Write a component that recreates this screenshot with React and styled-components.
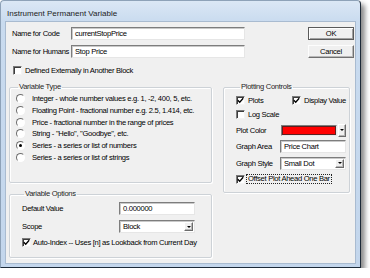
import React from 'react';
import styled, { createGlobalStyle } from 'styled-components';

const GlobalStyle = createGlobalStyle`
  html, body {
    margin: 0;
    padding: 0;
    background: #ffffff;
  }
  body {
    font-family: "Liberation Sans", Arial, sans-serif;
    font-size: 7.6px;
    letter-spacing: -0.3px;
    color: #000;
  }
`;

const StyledWindow = styled.div`
  width: 361px;
  height: 268px;
  box-sizing: border-box;
  display: flex;
  flex-direction: column;
  border: 1px solid;
  border-color: #8ea2b8 #1d2a38 #1d2a38 #8ea2b8;
  border-radius: 4px 4px 0 0;
  background: linear-gradient(to bottom, #dbe7f5 0px, #c9dbef 21px, #c3d6ec 100%);
  box-shadow: 4px 4px 5px rgba(0, 0, 0, 0.45);
`;

const StyledTitleBar = styled.div`
  height: 21px;
  box-sizing: border-box;
  padding: 3px 0 0 6px;
  display: flex;
  align-items: center;
  font-size: 8px;
  letter-spacing: 0;
  color: #1c1c1c;
`;

const StyledContent = styled.div`
  flex: 1;
  margin: 0 5px 4px 5px;
  background: #f0f0f0;
  box-shadow: 0 0 0 1px #a9bbd0;
  padding-top: 5px;
  display: flex;
  flex-direction: column;
`;

const StyledTopArea = styled.div`
  display: flex;
  padding: 0 1px 0 6px;
`;

const StyledStack = styled.div`
  display: flex;
  flex-direction: column;
  gap: ${({ $gap }) => $gap ?? 5}px;
  margin-top: ${({ $top }) => $top ?? 0}px;
`;

const StyledFieldRow = styled.div`
  display: flex;
  align-items: center;
  height: 13px;
  margin-top: ${({ $top }) => $top ?? 0}px;
`;

const StyledFieldLabel = styled.span`
  width: ${({ $width }) => $width}px;
  flex-shrink: 0;
  white-space: nowrap;
`;

const StyledTextBox = styled.div`
  width: ${({ $width }) => $width}px;
  height: 13px;
  box-sizing: border-box;
  display: flex;
  align-items: center;
  padding-left: 3px;
  background: #fff;
  border: 1px solid;
  border-color: #7d7d7d #e6e6e6 #e6e6e6 #7d7d7d;
  box-shadow: inset 1px 1px 0 #c9c9c9;
  white-space: nowrap;
  overflow: hidden;
`;

const StyledSelectText = styled.span`
  flex: 1;
`;

const StyledArrowButton = styled.span`
  width: ${({ $width }) => $width ?? 9}px;
  height: ${({ $height }) => $height ?? 9}px;
  box-sizing: border-box;
  margin-right: ${({ $inset }) => ($inset ? 1 : 0)}px;
  display: flex;
  align-items: center;
  justify-content: center;
  background: #f0f0f0;
  border: 1px solid;
  border-color: #ffffff #6b6b6b #6b6b6b #ffffff;
  box-shadow: inset -1px -1px 0 #b5b5b5;
  &::after {
    content: '';
    border-left: 2px solid transparent;
    border-right: 2px solid transparent;
    border-top: 2px solid #000;
  }
`;

const StyledButton = styled.div`
  width: 46px;
  height: 13px;
  box-sizing: border-box;
  display: flex;
  align-items: center;
  justify-content: center;
  background: #f0f0f0;
  border: 1px solid;
  border-color: ${({ $primary }) =>
    $primary ? '#5a5a5a' : '#fdfdfd #707070 #707070 #fdfdfd'};
  box-shadow: ${({ $primary }) =>
    $primary ? 'inset 1px 1px 0 #ffffff, inset -1px -1px 0 #a0a0a0' : 'inset -1px -1px 0 #b8b8b8'};
`;

const StyledButtonStack = styled(StyledStack)`
  margin-left: auto;
`;

const StyledCheckRow = styled.div`
  display: flex;
  align-items: center;
  height: 9px;
  gap: ${({ $gap }) => $gap ?? 3}px;
  margin-top: ${({ $top }) => $top ?? 0}px;
  padding-left: ${({ $left }) => $left ?? 0}px;
  white-space: nowrap;
`;

const StyledCheckBox = styled.span`
  width: 9px;
  height: 9px;
  flex-shrink: 0;
  box-sizing: border-box;
  display: flex;
  align-items: center;
  justify-content: center;
  background: #fff;
  border: 1px solid;
  border-color: #7a7a7a #f4f4f4 #f4f4f4 #7a7a7a;
  box-shadow: inset 1px 1px 0 #3c3c3c;
`;

const StyledRadio = styled.span`
  width: 9px;
  height: 9px;
  flex-shrink: 0;
  box-sizing: border-box;
  border-radius: 50%;
  display: flex;
  align-items: center;
  justify-content: center;
  background: #fff;
  border: 1px solid;
  border-color: #6e6e6e #ffffff #ffffff #6e6e6e;
  &::after {
    content: '';
    width: 3px;
    height: 3px;
    border-radius: 50%;
    background: ${({ $checked }) => ($checked ? '#000' : 'transparent')};
  }
`;

const StyledFocusText = styled.span`
  border: 1px dotted #222;
  padding: 0 1px;
  line-height: 8px;
`;

const StyledColumns = styled.div`
  display: flex;
  gap: 11px;
  margin-top: 7px;
  padding-left: 3px;
`;

const StyledGroup = styled.fieldset`
  width: ${({ $width }) => $width}px;
  height: ${({ $height }) => $height}px;
  box-sizing: border-box;
  margin: 0;
  padding: ${({ $pad }) => $pad};
  min-width: 0;
  border: 1px solid #cdd2d7;
  border-radius: 2px;
  box-shadow: inset 1px 1px 0 #ffffff, 1px 1px 0 #ffffff;
`;

const StyledLegend = styled.legend`
  margin-left: ${({ $left }) => $left ?? 2}px;
  padding: 0 1px;
  line-height: 10px;
  color: #1e1e1e;
`;

const StyledRadioList = styled.div`
  display: flex;
  flex-direction: column;
`;

const StyledRadioRow = styled.div`
  display: flex;
  align-items: center;
  gap: 7px;
  height: 11.7px;
  white-space: nowrap;
`;

const StyledCheckPair = styled.div`
  display: grid;
  grid-template-columns: 56px auto;
`;

const StyledColorBox = styled.span`
  width: 56px;
  height: 11px;
  box-sizing: border-box;
  margin-right: 1px;
  border: 1px solid;
  border-color: #7d7d7d #e6e6e6 #e6e6e6 #7d7d7d;
  background: #ff0000;
  box-shadow: inset 0 0 0 1px #5c2020;
`;

const Tick = () => (
  <svg width="7" height="7" viewBox="0 0 7 7">
    <path d="M0.8 3.2 L2.7 5.2 L6.2 1.2" fill="none" stroke="#000" strokeWidth="1.3" />
  </svg>
);

const CheckBox = ({ checked, children, focused, ...rest }) => (
  <StyledCheckRow {...rest}>
    <StyledCheckBox>{checked && <Tick />}</StyledCheckBox>
    {focused ? <StyledFocusText>{children}</StyledFocusText> : <span>{children}</span>}
  </StyledCheckRow>
);

const SelectBox = ({ width, children }) => (
  <StyledTextBox $width={width}>
    <StyledSelectText>{children}</StyledSelectText>
    <StyledArrowButton $inset />
  </StyledTextBox>
);

const variableTypes = [
  'Integer - whole number values e.g. 1, -2, 400, 5, etc.',
  'Floating Point - fractional number e.g. 2.5, 1.414, etc.',
  'Price - fractional number in the range of prices',
  'String - "Hello", "Goodbye", etc.',
  'Series - a series or list of numbers',
  'Series - a series or list of strings',
];

const App = () => {
  return (
    <>
      <GlobalStyle />
      <StyledWindow>
        <StyledTitleBar>Instrument Permanent Variable</StyledTitleBar>
        <StyledContent>
          <StyledTopArea>
            <StyledStack>
              <StyledFieldRow>
                <StyledFieldLabel $width={59}>Name for Code</StyledFieldLabel>
                <StyledTextBox $width={174}>currentStopPrice</StyledTextBox>
              </StyledFieldRow>
              <StyledFieldRow>
                <StyledFieldLabel $width={59}>Name for Humans</StyledFieldLabel>
                <StyledTextBox $width={174}>Stop Price</StyledTextBox>
              </StyledFieldRow>
            </StyledStack>
            <StyledButtonStack>
              <StyledButton $primary>OK</StyledButton>
              <StyledButton>Cancel</StyledButton>
            </StyledButtonStack>
          </StyledTopArea>

          <CheckBox $top={8} $left={7}>
            Defined Externally in Another Block
          </CheckBox>

          <StyledColumns>
            <StyledStack $gap={6}>
              <StyledGroup $width={203} $height={101} $pad="1px 0 0 6px">
                <StyledLegend>Variable Type</StyledLegend>
                <StyledRadioList>
                  {variableTypes.map((label, i) => (
                    <StyledRadioRow key={label}>
                      <StyledRadio $checked={i === 4} />
                      <span>{label}</span>
                    </StyledRadioRow>
                  ))}
                </StyledRadioList>
              </StyledGroup>

              <StyledGroup $width={203} $height={69} $pad="3px 0 0 12px">
                <StyledLegend>Variable Options</StyledLegend>
                <StyledStack>
                  <StyledFieldRow>
                    <StyledFieldLabel $width={97}>Default Value</StyledFieldLabel>
                    <StyledTextBox $width={76}>0.000000</StyledTextBox>
                  </StyledFieldRow>
                  <StyledFieldRow>
                    <StyledFieldLabel $width={97}>Scope</StyledFieldLabel>
                    <SelectBox width={76}>Block</SelectBox>
                  </StyledFieldRow>
                  <CheckBox checked $gap={2}>
                    Auto-Index -- Uses [n] as Lookback from Current Day
                  </CheckBox>
                </StyledStack>
              </StyledGroup>
            </StyledStack>

            <StyledGroup $width={127} $height={111} $pad="3.5px 0 0 12px">
              <StyledLegend $left={4}>Plotting Controls</StyledLegend>
              <StyledCheckPair>
                <CheckBox checked>Plots</CheckBox>
                <CheckBox checked>Display Value</CheckBox>
              </StyledCheckPair>
              <CheckBox $top={5}>Log Scale</CheckBox>
              <StyledFieldRow $top={5}>
                <StyledFieldLabel $width={45}>Plot Color</StyledFieldLabel>
                <StyledColorBox />
                <StyledArrowButton $width={8} $height={13} />
              </StyledFieldRow>
              <StyledStack $gap={4} $top={3}>
                <StyledFieldRow>
                  <StyledFieldLabel $width={44}>Graph Area</StyledFieldLabel>
                  <StyledTextBox $width={66}>Price Chart</StyledTextBox>
                </StyledFieldRow>
                <StyledFieldRow>
                  <StyledFieldLabel $width={44}>Graph Style</StyledFieldLabel>
                  <SelectBox width={66}>Small Dot</SelectBox>
                </StyledFieldRow>
              </StyledStack>
              <CheckBox checked focused $top={5} $gap={1}>
                Offset Plot Ahead One Bar
              </CheckBox>
            </StyledGroup>
          </StyledColumns>
        </StyledContent>
      </StyledWindow>
    </>
  );
};

export default App;
